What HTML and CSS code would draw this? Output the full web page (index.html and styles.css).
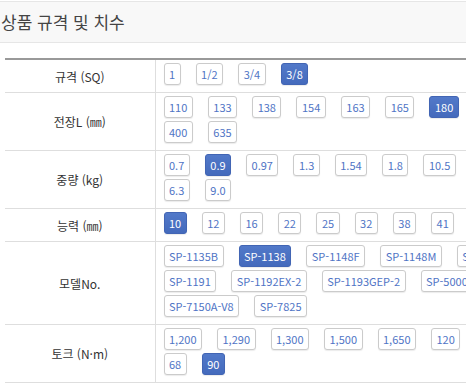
FILE: index.html
```html
<!DOCTYPE html>
<html lang="ko">
<head>
<meta charset="utf-8">
<title>상품 규격 및 치수</title>
<link rel="stylesheet" href="styles.css">
</head>
<body>
<div class="page">
  <div class="section-head">상품 규격 및 치수</div>
  <table class="spec">
    <colgroup><col class="c-label"><col class="c-value"></colgroup>
    <tbody>
      <tr>
        <th>규격 (SQ)</th>
        <td><div class="opts">
          <span class="opt">1</span><span class="opt">1/2</span><span class="opt">3/4</span><span class="opt on">3/8</span>
        </div></td>
      </tr>
      <tr>
        <th>전장L (㎜)</th>
        <td><div class="opts">
          <span class="opt">110</span><span class="opt">133</span><span class="opt">138</span><span class="opt">154</span><span class="opt">163</span><span class="opt">165</span><span class="opt on">180</span><span class="opt">200</span><span class="opt">400</span><span class="opt">635</span>
        </div></td>
      </tr>
      <tr>
        <th>중량 (kg)</th>
        <td><div class="opts">
          <span class="opt">0.7</span><span class="opt on">0.9</span><span class="opt">0.97</span><span class="opt">1.3</span><span class="opt">1.54</span><span class="opt">1.8</span><span class="opt">10.5</span><span class="opt">2.4</span><span class="opt">6.3</span><span class="opt">9.0</span>
        </div></td>
      </tr>
      <tr>
        <th>능력 (㎜)</th>
        <td><div class="opts">
          <span class="opt on">10</span><span class="opt">12</span><span class="opt">16</span><span class="opt">22</span><span class="opt">25</span><span class="opt">32</span><span class="opt">38</span><span class="opt">41</span><span class="opt">45</span>
        </div></td>
      </tr>
      <tr>
        <th>모델No.</th>
        <td><div class="opts">
          <span class="opt">SP-1135B</span><span class="opt on">SP-1138</span><span class="opt">SP-1148F</span><span class="opt">SP-1148M</span><span class="opt">SP-1150</span><span class="opt">SP-1191</span><span class="opt">SP-1192EX-2</span><span class="opt">SP-1193GEP-2</span><span class="opt">SP-5000C</span><span class="opt">SP-7150A-V8</span><span class="opt">SP-7825</span>
        </div></td>
      </tr>
      <tr>
        <th>토크 (N·m)</th>
        <td><div class="opts">
          <span class="opt">1,200</span><span class="opt">1,290</span><span class="opt">1,300</span><span class="opt">1,500</span><span class="opt">1,650</span><span class="opt">120</span><span class="opt">150</span><span class="opt">68</span><span class="opt on">90</span>
        </div></td>
      </tr>
    </tbody>
  </table>
</div>
</body>
</html>
```
FILE: styles.css
```css
html, body {
  margin: 0;
  padding: 0;
  overflow: hidden;
  background: #fff;
}
.page {
  width: 466px;
  overflow: hidden;
  padding-top: 1px;
  font-family: "Noto Sans CJK KR", "Noto Sans", sans-serif;
}
.section-head {
  height: 40px;
  line-height: 40px;
  border-top: 1px solid #e6e6e6;
  border-bottom: 1px solid #e6e6e6;
  background: #f8f8f8;
  font-size: 17px;
  color: #444;
  padding-left: 1px;
  white-space: nowrap;
}
.spec {
  margin: 15px 0 0 5px;
  width: 530px;
  table-layout: fixed;
  border-collapse: collapse;
  border-top: 2px solid #999;
}
.c-label { width: 150px; }
.spec th {
  font-weight: normal;
  font-size: 12px;
  color: #333;
  text-align: center;
  vertical-align: middle;
  border-right: 1px solid #dedede;
  border-bottom: 1px solid #dedede;
  padding: 0;
}
.spec td {
  padding: 3px 8px 7px 8px;
  border-bottom: 1px solid #dedede;
  vertical-align: top;
}
.opts {
  display: flex;
  flex-wrap: wrap;
  gap: 3px 15px;
}
.opt {
  box-sizing: border-box;
  height: 22px;
  line-height: 20px;
  padding: 0 4.5px;
  border: 1px solid #cbcbcb;
  border-radius: 3px;
  box-shadow: 0 1px 1px rgba(0,0,0,0.08);
  background: #fff;
  color: #4f74c5;
  font-size: 11px;
  white-space: nowrap;
}
.opt.on {
  background: linear-gradient(#5279c9, #446abc);
  border-color: #4265b4;
  color: #fff;
}
```
